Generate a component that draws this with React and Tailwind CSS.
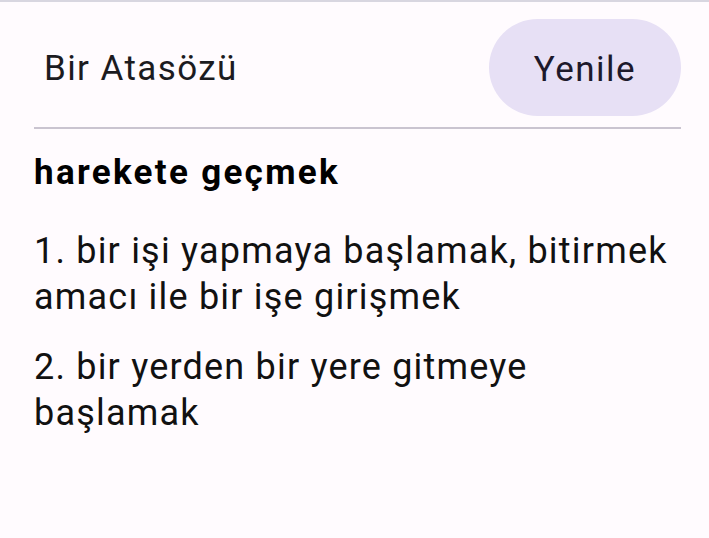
import React from 'react';

const App = () => {
  return (
    <div className="min-h-screen w-[709px] bg-[#fffbfe] text-[#1c1b1f]" style={{ fontFamily: 'Roboto, "Noto Sans", sans-serif' }}>
      {/* top edge shadow */}
      <div className="h-[2px] bg-[#d8d6e0]" />

      <div className="pl-[34px] pr-[28px]">
        {/* Header */}
        <div className="flex items-center justify-between pt-[17px]">
          <span className="pl-[10px] pt-[3px] text-[35px] leading-[40px] tracking-[1.4px] text-[#1c1b1f]">Bir Atasözü</span>
          <button className="flex h-[97px] w-[192px] items-center justify-center rounded-full bg-[#e7e0f5] pt-[5px] text-[35px] tracking-[1.5px] text-[#1d192b]">
            Yenile
          </button>
        </div>
        <div className="mt-[11px] h-[2px] bg-[#cac4d0]" />

        {/* Content */}
        <h2 className="mt-[23px] text-[35px] font-bold leading-[42px] tracking-[2.3px] text-black">harekete geçmek</h2>

        <div className="mt-[34px] flex flex-col gap-[24px] text-[36px] leading-[46px] tracking-[1.2px] text-[#111]">
          <p>1. bir işi yapmaya başlamak, bitirmek amacı ile bir işe girişmek</p>
          <p>2. bir yerden bir yere gitmeye başlamak</p>
        </div>
      </div>
    </div>
  );
};

export default App;
